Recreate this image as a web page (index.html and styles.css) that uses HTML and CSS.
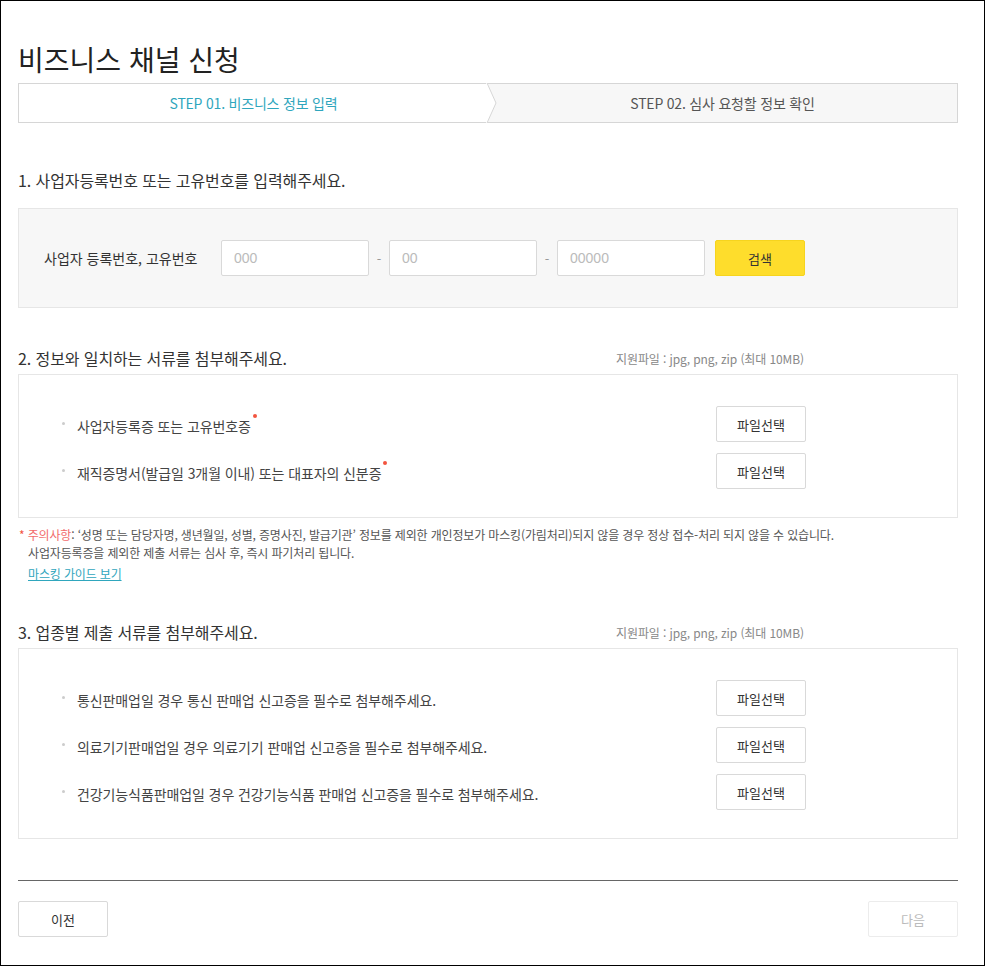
FILE: index.html
```html
<!DOCTYPE html>
<html lang="ko">
<head>
    <meta charset="UTF-8">
    <meta name="viewport" content="width=device-width, initial-scale=1.0">
    <title>비즈니스 채널 신청</title>
    <link rel="stylesheet" href="styles.css">
</head>
<body>
    <div class="page">
        <h1 class="page-title">비즈니스 채널 신청</h1>

        <div class="steps">
            <div class="step step-active">
                STEP 01. 비즈니스 정보 입력
                <svg class="step-arrow" width="12" height="40" viewBox="0 0 12 40">
                    <polygon points="0,0 1,0 10,20 1,40 0,40" fill="#fff"/>
                    <polyline points="1,0 10,20 1,40" fill="none" stroke="#d6d6d6" stroke-width="1"/>
                </svg>
            </div>
            <div class="step">STEP 02. 심사 요청할 정보 확인</div>
        </div>

        <h2 class="section-title first">1. 사업자등록번호 또는 고유번호를 입력해주세요.</h2>
        <div class="search-box">
            <label class="search-label" for="biz1">사업자 등록번호, 고유번호</label>
            <input type="text" id="biz1" class="biz-input" placeholder="000">
            <span class="dash">-</span>
            <input type="text" id="biz2" class="biz-input" placeholder="00">
            <span class="dash">-</span>
            <input type="text" id="biz3" class="biz-input" placeholder="00000">
            <button class="btn-search">검색</button>
        </div>

        <div class="section-head">
            <h2 class="section-title">2. 정보와 일치하는 서류를 첨부해주세요.</h2>
            <span class="file-note">지원파일 : jpg, png, zip (최대 10MB)</span>
        </div>
        <div class="doc-box">
            <ul class="doc-list">
                <li class="doc-item">
                    <span class="doc-text required">사업자등록증 또는 고유번호증</span>
                    <button class="btn-file">파일선택</button>
                </li>
                <li class="doc-item">
                    <span class="doc-text required">재직증명서(발급일 3개월 이내) 또는 대표자의 신분증</span>
                    <button class="btn-file">파일선택</button>
                </li>
            </ul>
        </div>

        <div class="notice">
            <p><span class="notice-star">*</span> <span class="notice-em">주의사항</span>: ‘성명 또는 담당자명, 생년월일, 성별, 증명사진, 발급기관’ 정보를 제외한 개인정보가 마스킹(가림처리)되지 않을 경우 정상 접수-처리 되지 않을 수 있습니다.</p>
            <p>사업자등록증을 제외한 제출 서류는 심사 후, 즉시 파기처리 됩니다.</p>
            <a href="#" class="notice-link">마스킹 가이드 보기</a>
        </div>

        <div class="section-head third">
            <h2 class="section-title">3. 업종별 제출 서류를 첨부해주세요.</h2>
            <span class="file-note">지원파일 : jpg, png, zip (최대 10MB)</span>
        </div>
        <div class="doc-box">
            <ul class="doc-list">
                <li class="doc-item">
                    <span class="doc-text">통신판매업일 경우 통신 판매업 신고증을 필수로 첨부해주세요.</span>
                    <button class="btn-file">파일선택</button>
                </li>
                <li class="doc-item">
                    <span class="doc-text">의료기기판매업일 경우 의료기기 판매업 신고증을 필수로 첨부해주세요.</span>
                    <button class="btn-file">파일선택</button>
                </li>
                <li class="doc-item">
                    <span class="doc-text">건강기능식품판매업일 경우 건강기능식품 판매업 신고증을 필수로 첨부해주세요.</span>
                    <button class="btn-file">파일선택</button>
                </li>
            </ul>
        </div>

        <div class="page-foot">
            <button class="btn-nav">이전</button>
            <button class="btn-nav" disabled>다음</button>
        </div>
    </div>
</body>
</html>
```

FILE: styles.css
```css
body {
    margin: 0;
    font-family: "Noto Sans CJK KR", "Noto Sans", sans-serif;
    color: #333;
    background-color: #fff;
}

.page {
    height: 966px;
    box-sizing: border-box;
    border: 1px solid #000;
    padding: 40px 26px 0 17px;
}

.page-title {
    margin: 0 0 6px;
    font-size: 28px;
    font-weight: 400;
    line-height: 36px;
    color: #222;
}

/* step bar */
.steps {
    display: flex;
    height: 40px;
    box-sizing: border-box;
    border: 1px solid #d6d6d6;
    background-color: #f7f7f7;
}

.step {
    position: relative;
    flex: 1;
    display: flex;
    align-items: center;
    justify-content: center;
    font-size: 14px;
    letter-spacing: -0.2px;
    color: #555;
}

.step-active {
    background-color: #fff;
    color: #2fa6bd;
}

.step-arrow {
    position: absolute;
    top: -1px;
    right: -10px;
    z-index: 1;
}

/* section titles */
.section-title {
    margin: 0;
    font-size: 16px;
    font-weight: 400;
    line-height: 22px;
    letter-spacing: -0.1px;
    color: #333;
}

.section-title.first {
    margin: 46px 0 17px;
}

.section-head {
    display: flex;
    align-items: center;
    justify-content: space-between;
    padding-right: 154px;
    margin: 39px 0 5px;
}

.section-head.third {
    margin-top: 38px;
}

.file-note {
    font-size: 12px;
    letter-spacing: -0.1px;
    color: #888;
}

/* business number search */
.search-box {
    display: flex;
    align-items: center;
    height: 100px;
    box-sizing: border-box;
    padding-left: 25px;
    border: 1px solid #e6e6e6;
    background-color: #f7f7f7;
}

.search-label {
    width: 177px;
    font-size: 14px;
    color: #333;
}

.biz-input {
    width: 148px;
    height: 36px;
    box-sizing: border-box;
    padding: 0 12px;
    border: 1px solid #d9d9d9;
    border-radius: 2px;
    font-family: "Liberation Sans", Arial, sans-serif;
    font-size: 14px;
    color: #333;
}

.biz-input::placeholder {
    color: #bbb;
}

.dash {
    width: 20px;
    text-align: center;
    font-size: 13px;
    color: #999;
}

.btn-search {
    width: 90px;
    height: 36px;
    margin-left: 10px;
    border: 1px solid #f6d41e;
    border-radius: 2px;
    background-color: #fedd2c;
    font-family: inherit;
    font-size: 13px;
    color: #333;
    cursor: pointer;
}

/* document lists */
.doc-box {
    border: 1px solid #e6e6e6;
    padding: 31px 151px 28px 42px;
}

.doc-list {
    list-style: none;
    margin: 0;
    padding: 0;
    display: flex;
    flex-direction: column;
    gap: 11px;
}

.doc-item {
    display: flex;
    align-items: center;
    justify-content: space-between;
}

.doc-text {
    position: relative;
    top: 2px;
    padding-left: 16px;
    font-size: 14px;
    line-height: 20px;
    letter-spacing: -0.1px;
    color: #444;
}

.doc-text::before {
    content: "";
    position: absolute;
    left: 1px;
    top: 6px;
    width: 3px;
    height: 3px;
    border-radius: 50%;
    background-color: #ccc;
}

.doc-text.required::after {
    content: "";
    position: absolute;
    right: -6px;
    top: -2px;
    width: 4px;
    height: 4px;
    border-radius: 50%;
    background-color: #f2543f;
}

.btn-file {
    width: 90px;
    height: 36px;
    border: 1px solid #d9d9d9;
    border-radius: 2px;
    background-color: #fff;
    font-family: inherit;
    font-size: 13px;
    color: #333;
    cursor: pointer;
}

/* notice */
.notice {
    margin-top: 8px;
    padding-left: 10px;
    font-size: 12px;
    line-height: 18px;
    letter-spacing: -0.15px;
    color: #555;
}

.notice p {
    margin: 0;
}

.notice p:first-child {
    text-indent: -9px;
}

.notice-star {
    color: #f2543f;
}

.notice-em {
    color: #f26b6b;
}

.notice-link {
    display: inline-block;
    margin-top: 3px;
    color: #2fa6bd;
}

/* footer buttons */
.page-foot {
    display: flex;
    justify-content: space-between;
    margin-top: 41px;
    padding-top: 20px;
    border-top: 1px solid #666;
}

.btn-nav {
    width: 90px;
    height: 36px;
    border: 1px solid #d9d9d9;
    border-radius: 2px;
    background-color: #fff;
    font-family: inherit;
    font-size: 13px;
    color: #333;
    cursor: pointer;
}

.btn-nav:disabled {
    border-color: #ececec;
    color: #bbb;
    cursor: default;
}
```
